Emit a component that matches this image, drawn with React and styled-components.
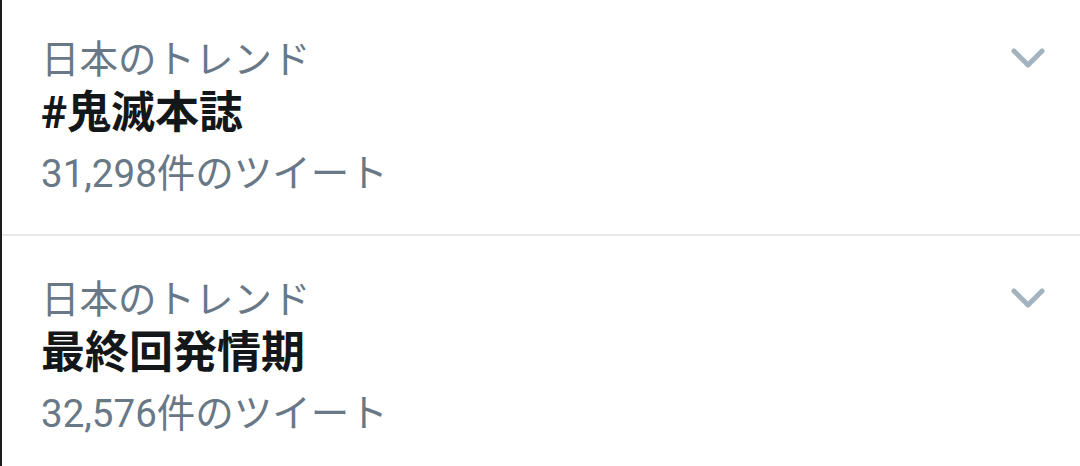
import React from "react";
import styled, { createGlobalStyle } from "styled-components";

const Global = createGlobalStyle`
  html, body { margin: 0; padding: 0; background: #ffffff; overflow: hidden; }
  body { font-family: Roboto, "Noto Sans CJK JP", sans-serif; }
`;

const Panel = styled.div`
  margin-top: -4px;
  height: 470px;
  border-left: 2px solid #1c1c1c;
  box-sizing: border-box;
  overflow: hidden;
  background: #fff;
`;

const Item = styled.div`
  display: flex;
  align-items: flex-start;
  justify-content: space-between;
  padding: 36px 34px 32px 39px;
  border-bottom: ${(p) => (p.$divider ? "2px solid #e6eaec" : "none")};
`;

const Texts = styled.div`
  display: flex;
  flex-direction: column;
`;

const Meta = styled.div`
  font-family: Roboto, "Noto Sans CJK JP", sans-serif;
  font-size: 38.5px;
  line-height: 56px;
  color: #687886;
  white-space: nowrap;
`;

const Title = styled.div`
  font-family: Roboto, "Noto Sans CJK JP", sans-serif;
  font-size: 44px;
  font-weight: 700;
  line-height: 50px;
  color: #14171a;
  white-space: nowrap;
`;

const Count = styled(Meta)`
  margin-top: 8px;
`;

const Chevron = styled.svg`
  width: 36px;
  height: 24px;
  margin-top: 14px;
  flex-shrink: 0;
`;

function Caret() {
  return (
    <Chevron viewBox="0 0 36 24">
      <polyline
        points="4,5 18,19 32,5"
        fill="none"
        stroke="#a3b3bf"
        strokeWidth="5"
        strokeLinecap="round"
        strokeLinejoin="round"
      />
    </Chevron>
  );
}

const trends = [
  { title: "#鬼滅本誌", count: "31,298件のツイート" },
  { title: "最終回発情期", count: "32,576件のツイート" },
];

export default function App() {
  return (
    <>
      <Global />
      <Panel>
        {trends.map((t, i) => (
          <Item key={t.title} $divider={i === 0}>
            <Texts>
              <Meta>日本のトレンド</Meta>
              <Title>{t.title}</Title>
              <Count>{t.count}</Count>
            </Texts>
            <Caret />
          </Item>
        ))}
      </Panel>
    </>
  );
}
